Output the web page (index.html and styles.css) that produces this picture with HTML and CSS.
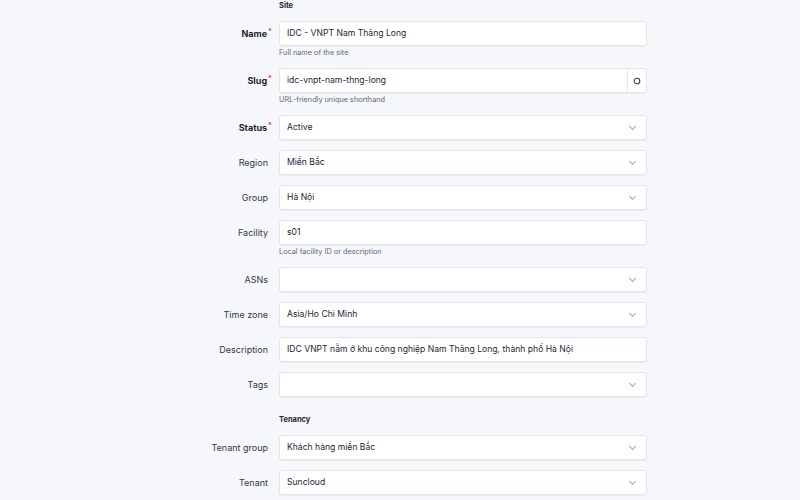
FILE: index.html
```html
<!DOCTYPE html>
<html lang="vi">
<head>
<meta charset="utf-8">
<title>Site</title>
<link rel="stylesheet" href="styles.css">
</head>
<body>
<div class="form">
  <div class="section-title">Site</div>

  <div class="row">
    <label class="label req">Name<span class="star">*</span></label>
    <div class="field">
      <div class="input">IDC - VNPT Nam Thăng Long</div>
      <div class="help">Full name of the site</div>
    </div>
  </div>

  <div class="row">
    <label class="label req">Slug<span class="star">*</span></label>
    <div class="field">
      <div class="input group">
        <span class="val">idc-vnpt-nam-thng-long</span>
        <span class="btn"><svg width="8" height="8" viewBox="0 0 8 8"><circle cx="4" cy="4" r="2.8" fill="none" stroke="#2f3a55" stroke-width="1.1"/></svg></span>
      </div>
      <div class="help">URL-friendly unique shorthand</div>
    </div>
  </div>

  <div class="row">
    <label class="label req">Status<span class="star">*</span></label>
    <div class="field"><div class="input select">Active<span class="chev"></span></div></div>
  </div>

  <div class="row">
    <label class="label">Region</label>
    <div class="field"><div class="input select">Miền Bắc<span class="chev"></span></div></div>
  </div>

  <div class="row">
    <label class="label">Group</label>
    <div class="field"><div class="input select">Hà Nội<span class="chev"></span></div></div>
  </div>

  <div class="row">
    <label class="label">Facility</label>
    <div class="field">
      <div class="input">s01</div>
      <div class="help">Local facility ID or description</div>
    </div>
  </div>

  <div class="row">
    <label class="label">ASNs</label>
    <div class="field"><div class="input select"><span class="chev"></span></div></div>
  </div>

  <div class="row">
    <label class="label">Time zone</label>
    <div class="field"><div class="input select">Asia/Ho Chi Minh<span class="chev"></span></div></div>
  </div>

  <div class="row">
    <label class="label">Description</label>
    <div class="field"><div class="input">IDC VNPT nằm ở khu công nghiệp Nam Thăng Long, thành phố Hà Nội</div></div>
  </div>

  <div class="row">
    <label class="label">Tags</label>
    <div class="field"><div class="input select"><span class="chev"></span></div></div>
  </div>

  <div class="section-title second">Tenancy</div>

  <div class="row">
    <label class="label">Tenant group</label>
    <div class="field"><div class="input select">Khách hàng miền Bắc<span class="chev"></span></div></div>
  </div>

  <div class="row tight">
    <label class="label">Tenant</label>
    <div class="field"><div class="input select">Suncloud<span class="chev"></span></div></div>
  </div>
</div>
</body>
</html>
```

FILE: styles.css
```css
* { box-sizing: border-box; }

html, body {
  margin: 0;
  padding: 0;
  background: #f6f7fb;
  font-family: Inter, "Noto Sans", sans-serif;
  color: #1d2535;
}

.form {
  width: 647px;
  padding-top: 0;
}

.section-title {
  margin-left: 279px;
  font-size: 7.5px;
  font-weight: 700;
  line-height: 11px;
  margin-bottom: 10px;
  color: #1d2535;
}

.section-title.second {
  margin-top: 17px;
}

.row {
  display: grid;
  grid-template-columns: 279px 368px;
  margin-bottom: 10px;
}

.label {
  display: block;
  height: 25px;
  text-align: right;
  padding-right: 11px;
  font-size: 9px;
  line-height: 25px;
  color: #303848;
  white-space: nowrap;
}

.label.req {
  font-weight: 700;
  color: #1d2535;
}

.star {
  position: relative;
  top: -3px;
  color: #d63939;
  font-size: 7px;
  line-height: 0;
  margin-left: 1px;
  margin-right: -4px;
}

.input {
  height: 25px;
  background: #fff;
  border: 1px solid #e2e5ec;
  border-radius: 3px;
  box-shadow: 0 1px 1px rgba(30, 40, 60, 0.05);
  padding: 0 7px;
  font-size: 8.6px;
  line-height: 23px;
  color: #1d2535;
  white-space: nowrap;
  overflow: hidden;
}

.input.select {
  display: flex;
  justify-content: space-between;
  align-items: center;
}

.chev {
  width: 5px;
  height: 5px;
  border-right: 1px solid #a2a8b5;
  border-bottom: 1px solid #a2a8b5;
  transform: rotate(45deg);
  margin-right: 4px;
  margin-top: -3px;
  margin-left: auto;
}

.input.group {
  display: flex;
  padding-right: 0;
}

.input.group .val {
  flex: 1;
}

.input.group .btn {
  width: 19px;
  border-left: 1px solid #e2e5ec;
  display: flex;
  align-items: center;
  justify-content: center;
}

.help {
  font-size: 7.3px;
  line-height: 10px;
  margin-top: 2px;
  color: #5d6778;
}
```
